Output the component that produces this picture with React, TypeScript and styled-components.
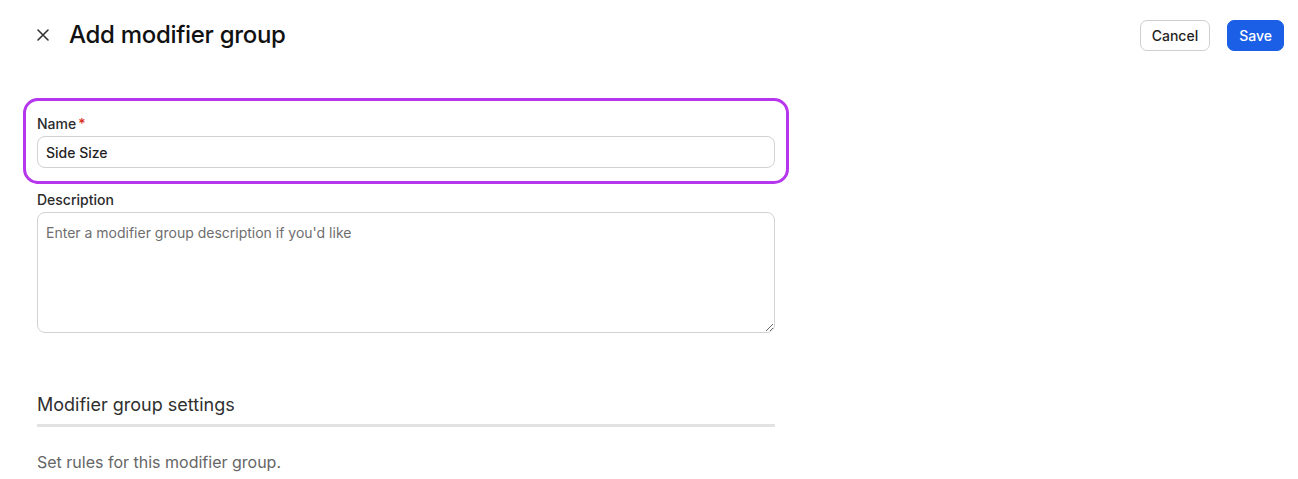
import { createGlobalStyle } from "styled-components"
import styled from "styled-components"

const GlobalStyle = createGlobalStyle`
    body {
        margin: 0;
        background: #ffffff;
        font-family: Inter, "Noto Sans", "Liberation Sans", sans-serif;
        color: #1f1f1f;
    }
    * {
        box-sizing: border-box;
    }
`

export const App = () => {
    return (
        <>
            <GlobalStyle />
            <Page>
                <Header>
                    <TitleWrap>
                        <CloseButton type="button" aria-label="Close">
                            <svg width="12" height="12" viewBox="0 0 12 12" fill="none">
                                <path d="M1 1L11 11M11 1L1 11" stroke="#333" strokeWidth="1.6" strokeLinecap="round" />
                            </svg>
                        </CloseButton>
                        <Title>Add modifier group</Title>
                    </TitleWrap>
                    <Actions>
                        <Button>Cancel</Button>
                        <Button $primary>Save</Button>
                    </Actions>
                </Header>
                <Content>
                    <Field $highlight>
                        <Label>
                            Name<Required>*</Required>
                        </Label>
                        <Input defaultValue="Side Size" />
                    </Field>
                    <Field>
                        <Label>Description</Label>
                        <TextArea placeholder="Enter a modifier group description if you'd like" />
                    </Field>
                    <Section>
                        <SectionTitle>Modifier group settings</SectionTitle>
                        <SectionText>Set rules for this modifier group.</SectionText>
                    </Section>
                </Content>
            </Page>
        </>
    )
}

export default App

const Page = styled.div`
    width: 100%;
    min-height: 479px;
`

const Header = styled.header`
    display: flex;
    align-items: center;
    justify-content: space-between;
    padding: 19px 14px 0 37px;
`

const TitleWrap = styled.div`
    display: flex;
    align-items: center;
    gap: 20px;
`

const CloseButton = styled.button`
    display: flex;
    align-items: center;
    justify-content: center;
    width: 12px;
    height: 12px;
    padding: 0;
    border: none;
    background: none;
    cursor: pointer;
`

const Title = styled.h1`
    margin: 0;
    font-size: 24px;
    line-height: 32px;
    font-weight: 500;
    letter-spacing: -0.3px;
    color: #111;
`

const Actions = styled.div`
    display: flex;
    gap: 17px;
`

const Button = styled.button<{ $primary?: boolean }>`
    height: 31px;
    padding: 0 ${(p) => (p.$primary ? "11px" : "11px")};
    border-radius: 7px;
    font-family: inherit;
    font-size: 14px;
    font-weight: 500;
    cursor: pointer;
    border: 1px solid ${(p) => (p.$primary ? "#1a5fe6" : "#cfcfcf")};
    background: ${(p) => (p.$primary ? "#1a5fe6" : "#ffffff")};
    color: ${(p) => (p.$primary ? "#ffffff" : "#1f1f1f")};
`

const Content = styled.main`
    width: 738px;
    margin-left: 37px;
    padding-top: 64px;
    display: flex;
    flex-direction: column;
`

const Field = styled.div<{ $highlight?: boolean }>`
    position: relative;
    display: flex;
    flex-direction: column;
    gap: 3px;
    margin-bottom: 23px;

    ${(p) =>
        p.$highlight &&
        `
        &::after {
            content: "";
            position: absolute;
            top: -17px;
            left: -14px;
            right: -14px;
            bottom: -16px;
            border: 3px solid #b636ee;
            border-radius: 15px;
            pointer-events: none;
        }
    `}
`

const Label = styled.label`
    font-size: 14px;
    line-height: 18px;
    font-weight: 500;
    color: #2b2b2b;
`

const Required = styled.span`
    color: #d92d20;
    margin-left: 2px;
`

const Input = styled.input`
    width: 100%;
    height: 32px;
    padding: 0 8px;
    border: 1px solid #d2d2d2;
    border-radius: 8px;
    font-family: inherit;
    font-size: 14px;
    font-weight: 500;
    color: #1f1f1f;
    outline: none;
`

const TextArea = styled.textarea`
    width: 100%;
    height: 121px;
    padding: 10px 8px;
    border: 1px solid #d2d2d2;
    border-radius: 8px;
    font-family: inherit;
    font-size: 14px;
    line-height: 20px;
    color: #1f1f1f;
    outline: none;
    &::placeholder {
        color: #6e6e6e;
    }
`

const Section = styled.section`
    margin-top: 35px;
`

const SectionTitle = styled.h2`
    margin: 0;
    padding-bottom: 5px;
    border-bottom: 3px solid #e2e2e2;
    font-size: 18px;
    line-height: 28px;
    font-weight: 400;
    color: #2f2f2f;
`

const SectionText = styled.p`
    margin: 23px 0 0;
    font-size: 16px;
    line-height: 24px;
    color: #666;
`
